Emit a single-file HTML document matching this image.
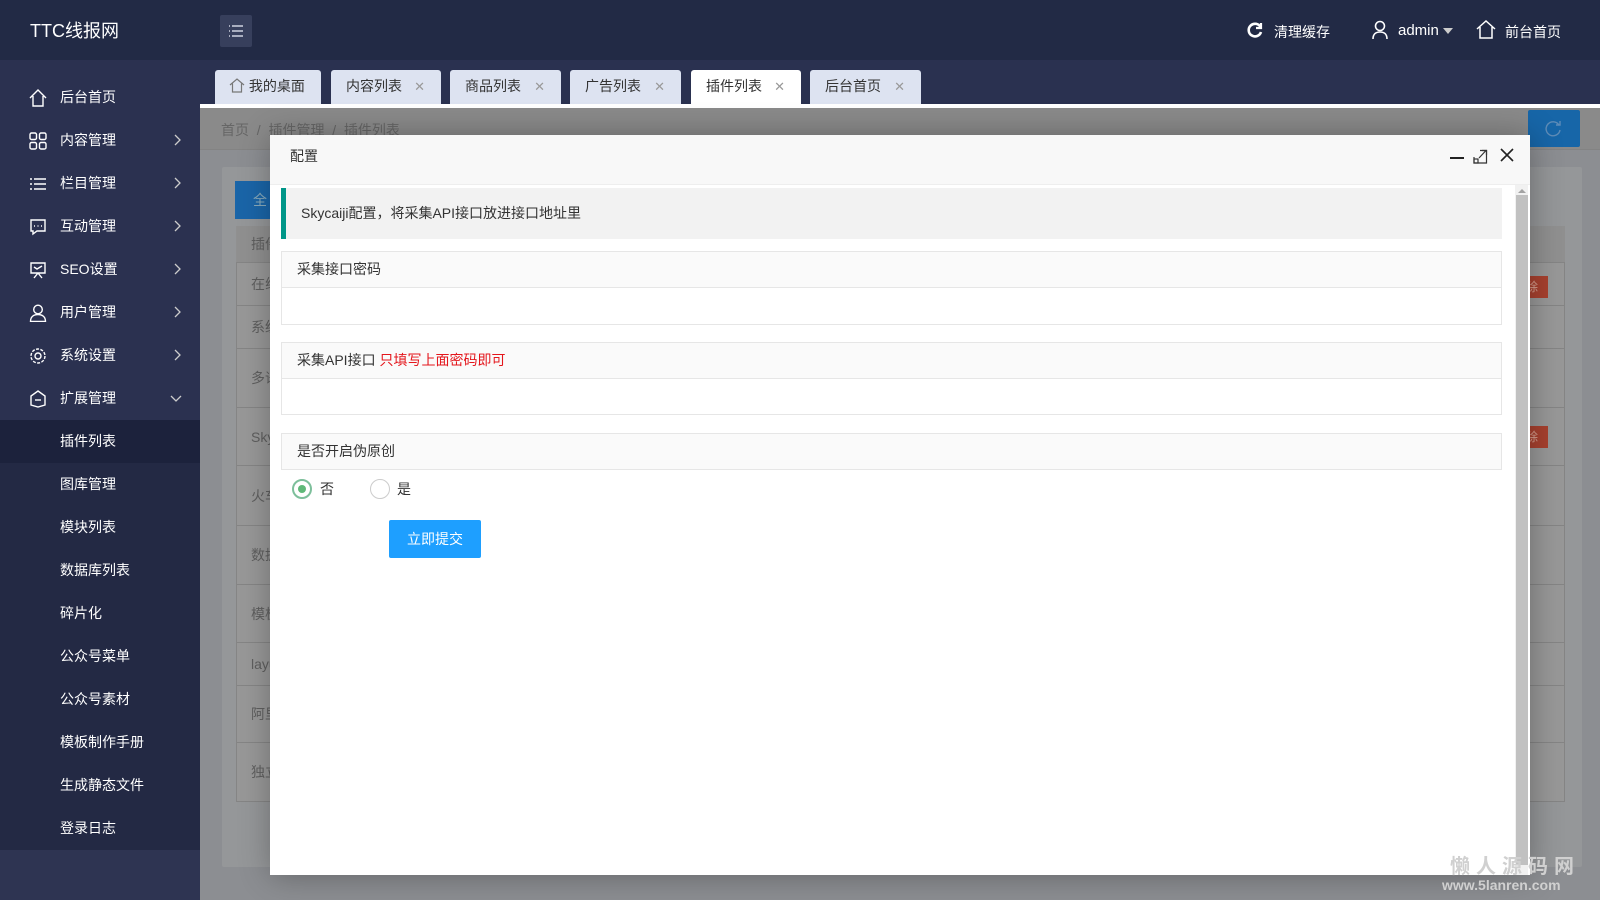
<!DOCTYPE html>
<html><head><meta charset="utf-8"><style>
*{margin:0;padding:0;box-sizing:border-box}
body{width:1600px;height:900px;overflow:hidden;position:relative;font-family:"Liberation Sans","Noto Sans CJK SC",sans-serif;font-size:14px;background:#8c8e92}
.abs{position:absolute}
#top{left:0;top:0;width:1600px;height:60px;background:#222a45;color:#fff}
#side{left:0;top:60px;width:200px;height:840px;background:#2b3150;color:#fff}
.mi{position:absolute;left:0;width:200px;height:43px;line-height:43px;font-size:14px}
.mi .ic{position:absolute;left:29px;top:13px;width:18px;height:18px}
.mi .tx{position:absolute;left:60px}
.mi .ar{position:absolute;left:172px;top:15px;width:10px;height:12px}
#tabbar{left:200px;top:60px;width:1400px;height:47px;background:#2a3150}
.tab{position:absolute;top:70px;height:35px;background:#dde3f1;border-radius:3px 3px 0 0;color:#333;font-size:14px;line-height:33px;padding-left:15px}
.tab .x{position:absolute;right:16px;top:0;color:#999;font-size:13px}
.row{position:absolute;left:236px;width:1329px;border-bottom:1px solid #858585;color:#5f5f5f;font-size:14px;padding-left:15px}
#modal{left:270px;top:135px;width:1260px;height:740px;background:#fff;box-shadow:1px 1px 30px rgba(0,0,0,.3)}
#mh{left:0;top:0;width:1260px;height:50px;background:#f8f8f8;border-bottom:1px solid #eee;line-height:42px;padding-left:20px;color:#333}
.lab{position:absolute;left:11px;width:1221px;height:37px;background:#fafafa;border:1px solid #e6e6e6;line-height:35px;padding-left:15px;color:#333}
.inp{position:absolute;left:11px;width:1221px;height:38px;background:#fff;border:1px solid #e6e6e6}
</style></head><body>
<div id="top" class="abs">
  <div class="abs" style="left:30px;top:17px;font-size:18px">TTC线报网</div>
  <div class="abs" style="left:220px;top:15px;width:32px;height:32px;background:#373f5c;border-radius:2px">
    <svg width="32" height="32" viewBox="0 0 32 32" stroke="#cfd3e0" stroke-width="1.5"><path d="M9 11h1M12 11h11M9 16h1M12 16h11M9 21h1M12 21h11"/></svg>
  </div>
  <svg class="abs" style="left:1246px;top:21px" width="18" height="18" viewBox="0 0 18 18" fill="none" stroke="#fff" stroke-width="2.6"><path d="M14.5 6A6.3 6.3 0 1 0 15 11"/><path d="M15 2v5h-5" stroke-width="2.2"/></svg>
  <div class="abs" style="left:1274px;top:22px;font-size:14px">清理缓存</div>
  <svg class="abs" style="left:1371px;top:20px" width="18" height="20" viewBox="0 0 18 20" fill="none" stroke="#fff" stroke-width="1.6"><circle cx="9" cy="6" r="4.5"/><path d="M2 19c0-5 3-7 7-7s7 2 7 7"/></svg>
  <div class="abs" style="left:1398px;top:22px;font-size:15px">admin</div>
  <div class="abs" style="left:1443px;top:28px;border:5px solid transparent;border-top:6px solid #ccc"></div>
  <svg class="abs" style="left:1476px;top:20px" width="20" height="19" viewBox="0 0 20 19" fill="none" stroke="#fff" stroke-width="1.5"><path d="M1 9L10 1l9 8M4 7v11h12V7"/></svg>
  <div class="abs" style="left:1505px;top:22px;font-size:14px">前台首页</div>
</div>

<div id="side" class="abs">
  <div class="mi" style="top:16px"><svg class="ic" viewBox="0 0 18 18" fill="none" stroke="#fff" stroke-width="1.4"><path d="M1 9L9 1l8 8M4 7v10h10V7"/></svg><span class="tx">后台首页</span></div>
  <div class="mi" style="top:59px"><svg class="ic" viewBox="0 0 18 18" fill="none" stroke="#fff" stroke-width="1.4"><rect x="1" y="1" width="6.5" height="6.5" rx="1.5"/><rect x="10.5" y="1" width="6.5" height="6.5" rx="1.5"/><rect x="1" y="10.5" width="6.5" height="6.5" rx="1.5"/><rect x="10.5" y="10.5" width="6.5" height="6.5" rx="1.5"/></svg><span class="tx">内容管理</span><svg class="ar" viewBox="0 0 10 12" fill="none" stroke="#ccc" stroke-width="1.3"><path d="M3 1l5 5-5 5"/></svg></div>
  <div class="mi" style="top:102px"><svg class="ic" viewBox="0 0 18 18" fill="none" stroke="#fff" stroke-width="1.4"><path d="M1 4h2M5 4h12M1 9h2M5 9h12M1 14h2M5 14h12"/></svg><span class="tx">栏目管理</span><svg class="ar" viewBox="0 0 10 12" fill="none" stroke="#ccc" stroke-width="1.3"><path d="M3 1l5 5-5 5"/></svg></div>
  <div class="mi" style="top:145px"><svg class="ic" viewBox="0 0 18 18" fill="none" stroke="#fff" stroke-width="1.4"><path d="M2 2h14v11H8l-4 3v-3H2z"/><path d="M5 8h1M8.5 8h1M12 8h1"/></svg><span class="tx">互动管理</span><svg class="ar" viewBox="0 0 10 12" fill="none" stroke="#ccc" stroke-width="1.3"><path d="M3 1l5 5-5 5"/></svg></div>
  <div class="mi" style="top:188px"><svg class="ic" viewBox="0 0 18 18" fill="none" stroke="#fff" stroke-width="1.4"><path d="M2 2h14v10H2zM5 6l3 2 5-3M9 12l-4 5M9 12l4 5"/></svg><span class="tx">SEO设置</span><svg class="ar" viewBox="0 0 10 12" fill="none" stroke="#ccc" stroke-width="1.3"><path d="M3 1l5 5-5 5"/></svg></div>
  <div class="mi" style="top:231px"><svg class="ic" viewBox="0 0 18 18" fill="none" stroke="#fff" stroke-width="1.4"><circle cx="9" cy="5.5" r="4.3"/><path d="M1.5 17.5c0-5 3.5-7 7.5-7s7.5 2 7.5 7z"/></svg><span class="tx">用户管理</span><svg class="ar" viewBox="0 0 10 12" fill="none" stroke="#ccc" stroke-width="1.3"><path d="M3 1l5 5-5 5"/></svg></div>
  <div class="mi" style="top:274px"><svg class="ic" viewBox="0 0 18 18" fill="none" stroke="#fff" stroke-width="1.4"><circle cx="9" cy="9" r="3"/><circle cx="9" cy="9" r="7" stroke-dasharray="3 1.4"/></svg><span class="tx">系统设置</span><svg class="ar" viewBox="0 0 10 12" fill="none" stroke="#ccc" stroke-width="1.3"><path d="M3 1l5 5-5 5"/></svg></div>
  <div class="mi" style="top:317px"><svg class="ic" viewBox="0 0 18 18" fill="none" stroke="#fff" stroke-width="1.4"><path d="M9 1l7 5v9l-7 2-7-2V6z"/><path d="M6 10h6"/></svg><span class="tx">扩展管理</span><svg class="ar" style="width:12px;height:10px;left:170px;top:16px" viewBox="0 0 12 10" fill="none" stroke="#ccc" stroke-width="1.3"><path d="M1 3l5 5 5-5"/></svg></div>
  <div class="mi" style="top:360px;background:#1c223c"><span class="tx">插件列表</span></div>
  <div class="mi" style="top:403px;background:#232944;height:430px"></div>
  <div class="mi" style="top:403px"><span class="tx">图库管理</span></div>
  <div class="mi" style="top:446px"><span class="tx">模块列表</span></div>
  <div class="mi" style="top:489px"><span class="tx">数据库列表</span></div>
  <div class="mi" style="top:532px"><span class="tx">碎片化</span></div>
  <div class="mi" style="top:575px"><span class="tx">公众号菜单</span></div>
  <div class="mi" style="top:618px"><span class="tx">公众号素材</span></div>
  <div class="mi" style="top:661px"><span class="tx">模板制作手册</span></div>
  <div class="mi" style="top:704px"><span class="tx">生成静态文件</span></div>
  <div class="mi" style="top:747px"><span class="tx">登录日志</span></div>
  <div class="abs" style="left:0;top:790px;width:200px;height:50px;background:#2e3452"></div>
</div>

<div id="tabbar" class="abs"></div>
<div class="tab" style="left:215px;width:106px;padding-left:14px"><svg style="vertical-align:-2px" width="16" height="15" viewBox="0 0 16 15" fill="none" stroke="#777" stroke-width="1.2"><path d="M1 7L8 1l7 6M3.5 5.5V14h9V5.5"/></svg> 我的桌面</div>
<div class="tab" style="left:331px;width:110px">内容列表<span class="x">✕</span></div>
<div class="tab" style="left:450px;width:111px">商品列表<span class="x">✕</span></div>
<div class="tab" style="left:570px;width:111px">广告列表<span class="x">✕</span></div>
<div class="tab" style="left:691px;width:110px;background:#fff">插件列表<span class="x">✕</span></div>
<div class="tab" style="left:810px;width:111px">后台首页<span class="x">✕</span></div>
<div class="abs" style="left:200px;top:104px;width:1400px;height:4px;background:#fff"></div>

<div class="abs" style="left:200px;top:108px;width:1400px;height:42px;background:#8a8a8a;border-bottom:1px solid #838383"></div>
<div class="abs" style="left:221px;top:120px;color:#666;font-size:14px">首页 &nbsp;/ &nbsp;插件管理 &nbsp;/ &nbsp;插件列表</div>
<div class="abs" style="left:1528px;top:110px;width:52px;height:37px;background:#1766a8;border-radius:2px"><svg style="margin:10px 0 0 16px" width="18" height="18" viewBox="0 0 18 18" fill="none" stroke="#5e8cb8" stroke-width="1.4"><path d="M15 5A7 7 0 1 0 16 10"/><path d="M16 1v4h-4"/></svg></div>
<div class="abs" style="left:222px;top:167px;width:1360px;height:700px;background:#959799;border-radius:2px"></div>
<div class="abs" style="left:235px;top:181px;width:60px;height:38px;background:#1a65a8;color:#8ab;line-height:38px;padding-left:18px">全</div>
<div class="abs" style="left:236px;top:226px;width:1329px;height:576px;border:1px solid #858585;background:#989898"></div>
<div class="abs" style="left:236px;top:226px;width:1329px;height:37px;background:#909090"></div>
<div class="row" style="top:226px;height:37px;line-height:37px">插件</div>
<div class="row" style="top:263px;height:43px;line-height:43px">在线</div>
<div class="row" style="top:306px;height:43px;line-height:43px">系统</div>
<div class="row" style="top:349px;height:59px;line-height:59px">多语</div>
<div class="row" style="top:408px;height:58px;line-height:58px">Sky</div>
<div class="row" style="top:466px;height:60px;line-height:60px">火车</div>
<div class="row" style="top:526px;height:59px;line-height:59px">数据</div>
<div class="row" style="top:585px;height:58px;line-height:58px">模板</div>
<div class="row" style="top:643px;height:43px;line-height:43px">layui</div>
<div class="row" style="top:686px;height:57px;line-height:57px">阿里</div>
<div class="row" style="top:743px;height:59px;line-height:59px">独立</div>
<div class="abs" style="left:1526px;top:276px;width:22px;height:22px;background:#a8412f;color:#d9a393;font-size:12px;line-height:22px">除</div>
<div class="abs" style="left:1526px;top:426px;width:22px;height:22px;background:#a8412f;color:#d9a393;font-size:12px;line-height:22px">除</div>

<div id="modal" class="abs">
  <div id="mh" class="abs">配置</div>
  <div class="abs" style="left:1180px;top:22px;width:14px;height:2px;background:#222"></div>
  <svg class="abs" style="left:1203px;top:14px" width="15" height="15" viewBox="0 0 15 15" fill="none" stroke="#333" stroke-width="1.2"><path d="M7 1.5h6.5V14H1V8"/><path d="M6 9l7-7.5M9 1.5h4.5V6"/><rect x="1" y="10" width="4" height="4"/></svg>
  <svg class="abs" style="left:1230px;top:13px" width="14" height="14" viewBox="0 0 14 14" stroke="#222" stroke-width="1.6"><path d="M1 1l12 12M13 1L1 13"/></svg>
  <div class="abs" style="left:1245px;top:50px;width:13px;height:690px;background:#f1f1f1"></div>
  <div class="abs" style="left:1246px;top:60px;width:12px;height:670px;background:#c1c1c1"></div>
  <div class="abs" style="left:1248px;top:50px;border:4px solid transparent;border-bottom:4px solid #a3a3a3"></div>

  <div class="abs" style="left:11px;top:53px;width:1221px;height:51px;background:#f2f2f2;border-left:5px solid #009688;line-height:50px;padding-left:15px;color:#333">Skycaiji配置，将采集API接口放进接口地址里</div>

  <div class="lab" style="top:116px">采集接口密码</div>
  <div class="inp" style="top:152px"></div>
  <div class="lab" style="top:207px">采集API接口 <span style="color:#e4161c">只填写上面密码即可</span></div>
  <div class="inp" style="top:243px;height:37px"></div>
  <div class="lab" style="top:298px">是否开启伪原创</div>
  <div class="abs" style="left:22px;top:344px;width:20px;height:20px;border:2px solid #7dbf9b;border-radius:50%"><div style="margin:4px;width:8px;height:8px;border-radius:50%;background:#5fb878"></div></div>
  <div class="abs" style="left:50px;top:344px;color:#333">否</div>
  <div class="abs" style="left:100px;top:344px;width:20px;height:20px;border:1.5px solid #ccc;border-radius:50%"></div>
  <div class="abs" style="left:127px;top:344px;color:#333">是</div>
  <div class="abs" style="left:119px;top:385px;width:92px;height:38px;background:#1e9fff;border-radius:2px;color:#fff;line-height:38px;text-align:center">立即提交</div>
</div>

<div class="abs" style="left:1450px;top:850px;color:#d0d0d0;font-size:20px;font-weight:bold;letter-spacing:6px">懒人源码网</div>
<div class="abs" style="left:1442px;top:877px;color:#d0d0d0;font-size:14px;font-weight:bold">www.5lanren.com</div>
</body></html>
